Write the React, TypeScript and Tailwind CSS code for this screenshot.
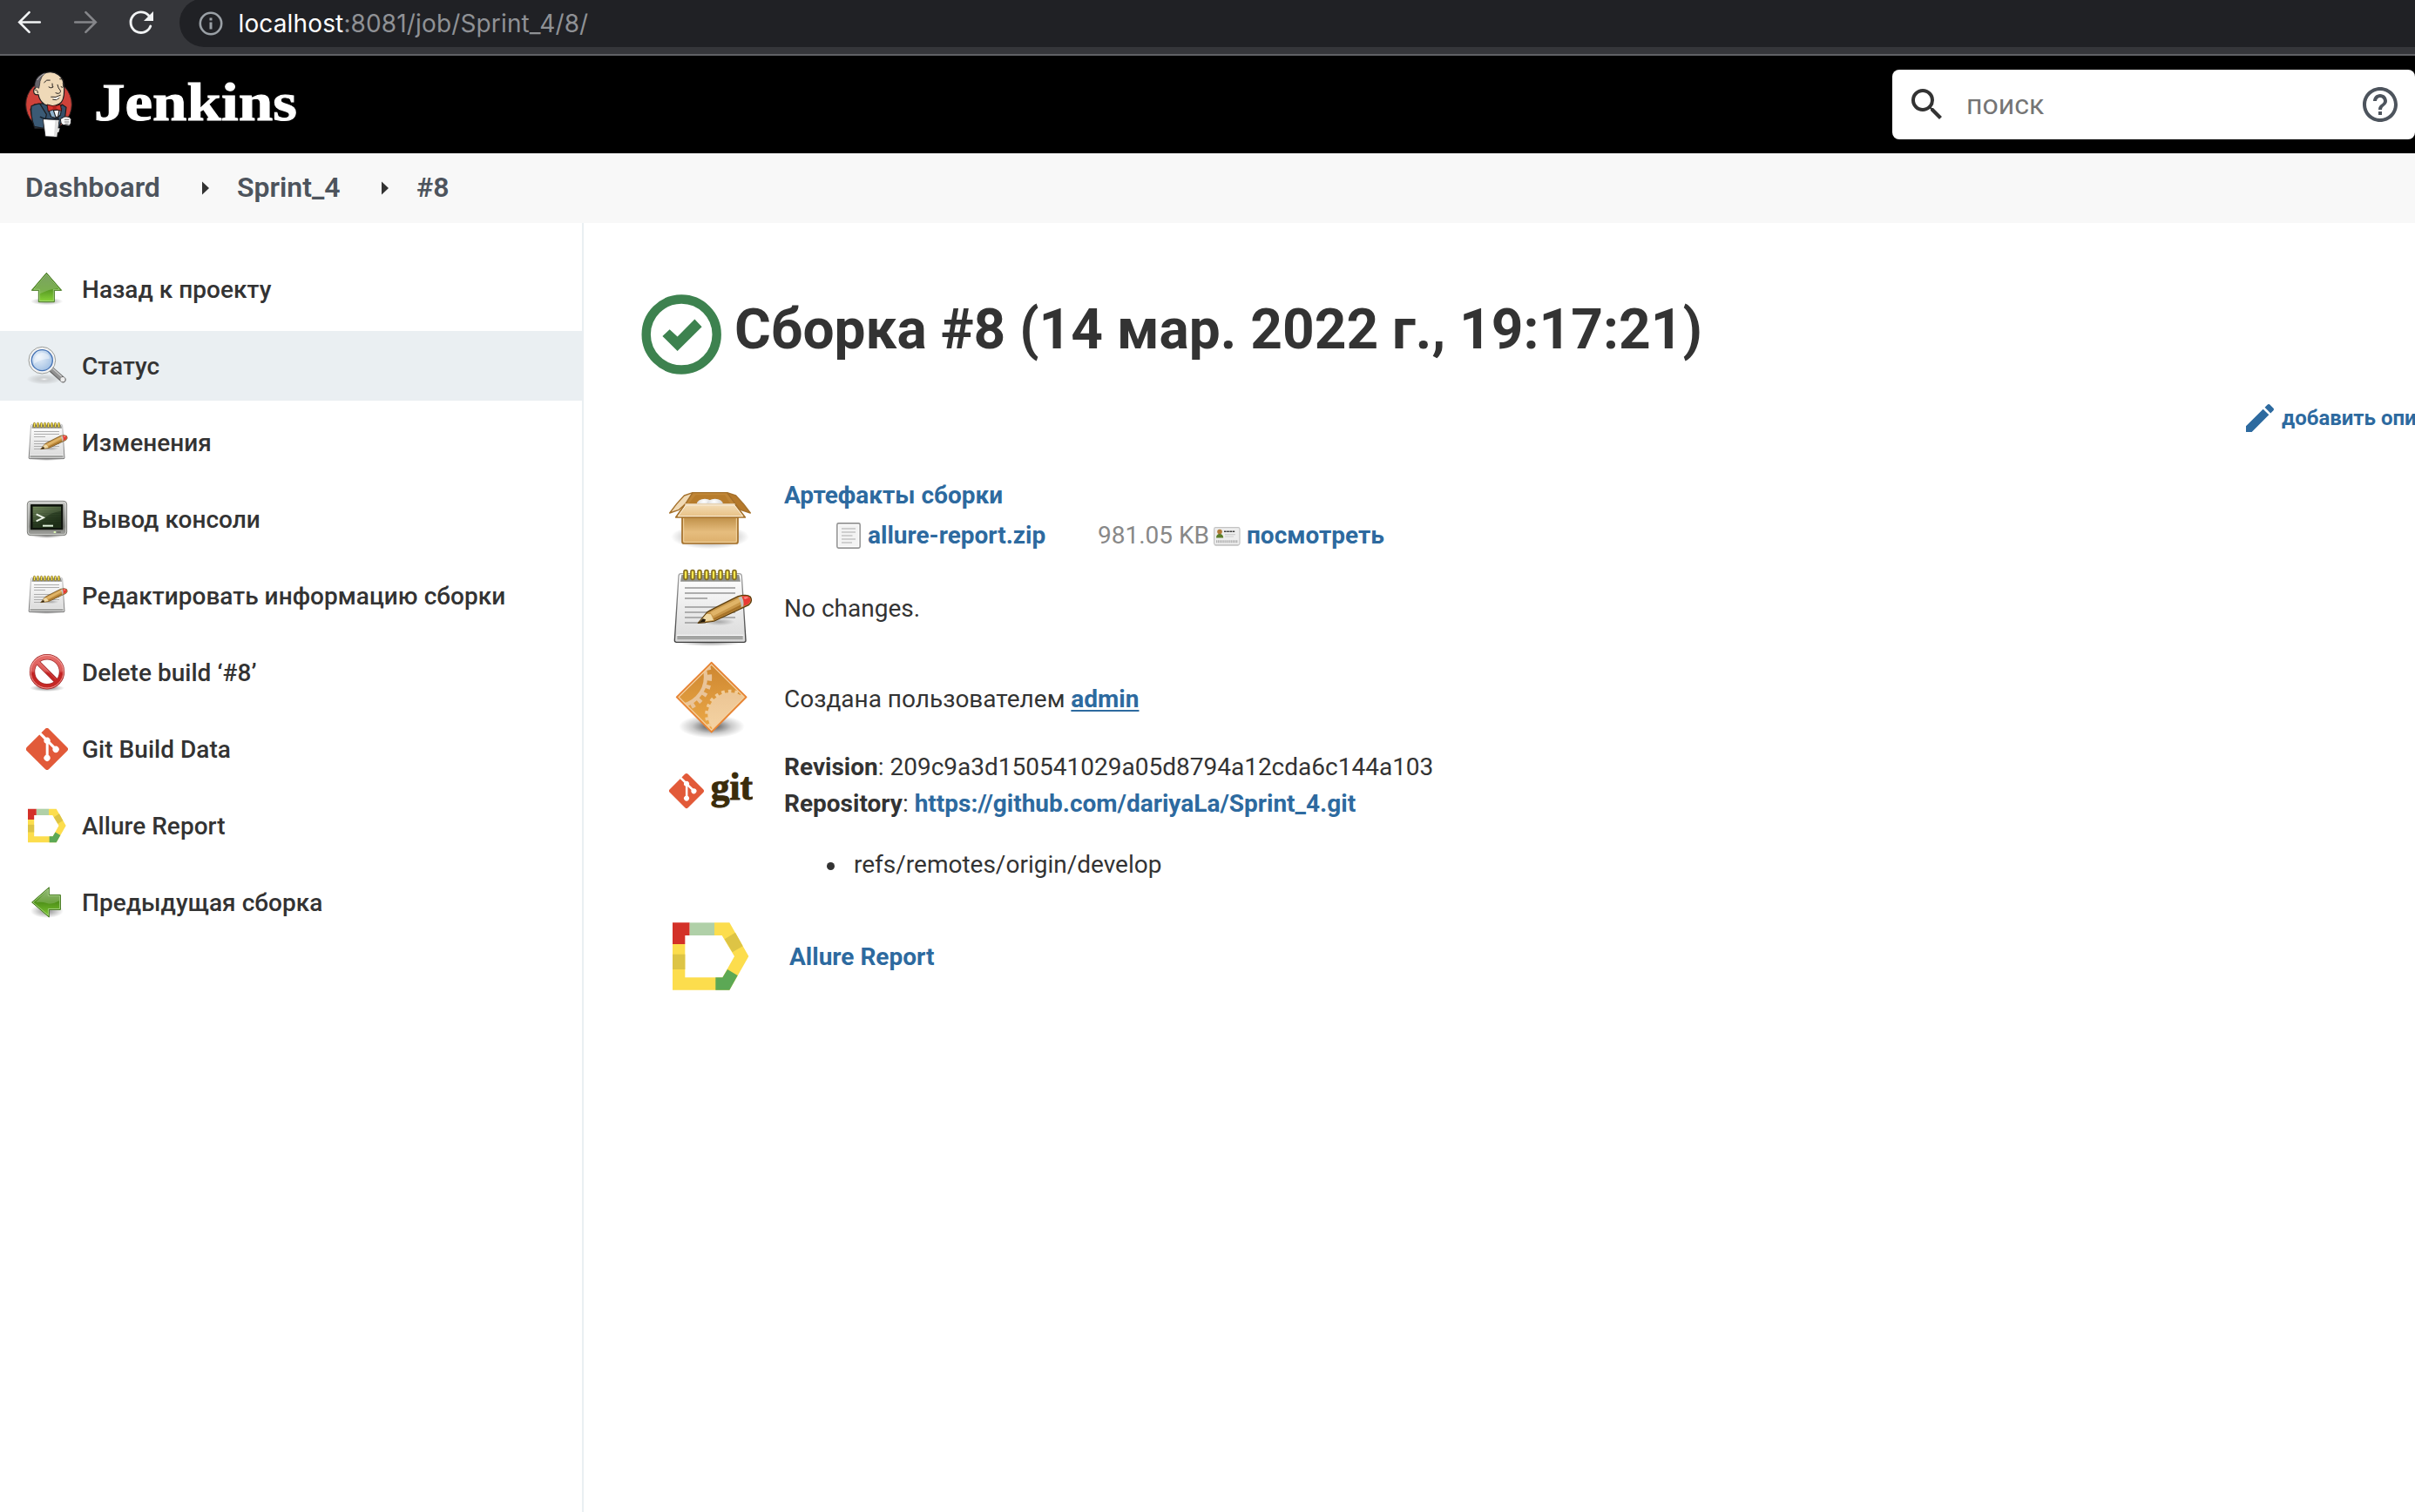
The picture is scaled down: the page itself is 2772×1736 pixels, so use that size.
import type { ReactNode } from "react";

function Notepad({ className }: { className: string }) {
  return (
    <svg viewBox="84 366 288 288" className={className}>
      <defs>
        <linearGradient id="paper" x1="0" y1="0" x2="0" y2="1">
          <stop offset="0" stopColor="#ffffff" />
          <stop offset="1" stopColor="#d9d9d9" />
        </linearGradient>
        <linearGradient id="paperEdge" x1="0" y1="0" x2="0" y2="1">
          <stop offset="0" stopColor="#a3a3a3" />
          <stop offset="1" stopColor="#3c3c3c" />
        </linearGradient>
        <radialGradient id="noteShadow">
          <stop offset="0" stopColor="#000" stopOpacity="0.45" />
          <stop offset="1" stopColor="#000" stopOpacity="0" />
        </radialGradient>
      </defs>
      <ellipse cx="225" cy="622" rx="115" ry="14" fill="url(#noteShadow)" />
      <path d="M124 386H326q7 0 8 8L348 616q0 6-6 6H109q-6 0-6-6L117 394q1-8 7-8Z" fill="url(#paper)" stroke="url(#paperEdge)" strokeWidth="4" />
      <path d="M127 390H325L330 413H123Z" fill="#8f908c" />
      <path d="M110 598H340" stroke="#fff" strokeWidth="3" />
      <path d="M112 600H338V613H112Z" fill="#a3a4a2" />
      {[141, 165, 189, 213, 237, 261, 285, 309].map((x) => (
        <rect key={x} x={x - 6} y="374" width="12" height="32" rx="6" fill="#fce94f" stroke="#857021" strokeWidth="5" />
      ))}
      <g fill="#adadad">
        <path d="M138 432H312V438H138ZM138 450H312V456H138ZM138 468H216V474H138ZM138 498H312V504H138ZM138 516H312V522H138ZM138 534H312V540H138ZM138 552H210V558H138Z" />
      </g>
      <ellipse cx="255" cy="552" rx="55" ry="13" fill="url(#noteShadow)" opacity="0.6" />
      <path d="M184 556L214 520Q220 514 322 464Q352 455 364 466Q373 482 358 494L240 549Q232 552 184 556Z" fill="#c9984a" stroke="#5c3d0c" strokeWidth="4" strokeLinejoin="round" />
      <path d="M226 520L326 470L332 482L236 532Z" fill="#e0b468" />
      <path d="M236 540L338 490L340 498L240 546Z" fill="#a8742a" />
      <path d="M188 553L213 524L228 526L237 546Z" fill="#f0d9a4" />
      <path d="M186 555L200 541L210 544L207 552Z" fill="#231809" />
      <path d="M322 469L334 464Q344 480 340 498L332 502Q333 482 322 469Z" fill="#c4c4c0" />
      <path d="M334 464Q354 458 362 468Q369 480 356 491L340 498Q344 480 334 464Z" fill="#e93a35" />
      <path d="M340 467Q352 463 358 469L345 474Z" fill="#f88f86" />
    </svg>
  );
}

function UpArrow() {
  return (
    <svg viewBox="90 54 144 144" className="size-12">
      <defs>
        <linearGradient id="up" x1="0" y1="0" x2="0" y2="1">
          <stop offset="0" stopColor="#5c8a3c" />
          <stop offset="0.6" stopColor="#5a9c24" />
          <stop offset="1" stopColor="#8ad63a" />
        </linearGradient>
        <radialGradient id="upShadow">
          <stop offset="0" stopColor="#000" stopOpacity="0.4" />
          <stop offset="1" stopColor="#000" stopOpacity="0" />
        </radialGradient>
      </defs>
      <ellipse cx="161" cy="168" rx="56" ry="13" fill="url(#upShadow)" />
      <path d="M160 70L212 130H187V170H133V130H109Z" fill="url(#up)" stroke="#44771e" strokeWidth="3" strokeLinejoin="round" />
      <path d="M160 75L205 127H184V167H136V127H116Z" fill="none" stroke="#b6dc98" strokeWidth="2" />
      <path d="M160 78L198 122Q170 126 137 142V126H119Z" fill="#fff" opacity="0.2" />
    </svg>
  );
}

function LeftArrow() {
  return (
    <svg viewBox="0 0 48 48" className="size-12">
      <defs>
        <linearGradient id="left" x1="0" y1="0" x2="0" y2="1">
          <stop offset="0" stopColor="#85ad67" />
          <stop offset="0.5" stopColor="#4f9118" />
          <stop offset="1" stopColor="#7fcb35" />
        </linearGradient>
        <radialGradient id="leftShadow">
          <stop offset="0" stopColor="#000" stopOpacity="0.45" />
          <stop offset="1" stopColor="#000" stopOpacity="0" />
        </radialGradient>
      </defs>
      <ellipse cx="24" cy="34" rx="19" ry="8" fill="url(#leftShadow)" />
      <path d="M26.3 6.8V15.6H39.4V32.4H26.3V41L6.6 24Z" fill="url(#left)" stroke="#44771e" strokeWidth="1" strokeLinejoin="round" />
      <path d="M25.4 9V16.5H38.5V31.5H25.4V38.8L8 24Z" fill="none" stroke="#b6dc98" strokeWidth="0.7" />
      <path d="M25 10V17H38V22Q30 27 24 25T11 24Z" fill="#fff" opacity="0.18" />
    </svg>
  );
}

function Magnifier() {
  return (
    <svg viewBox="90 318 144 144" className="size-12">
      <defs>
        <radialGradient id="lens" cx="0.35" cy="0.35" r="0.75">
          <stop offset="0" stopColor="#e8f1fa" />
          <stop offset="0.6" stopColor="#bdd3ec" />
          <stop offset="1" stopColor="#9bbce2" />
        </radialGradient>
        <radialGradient id="lensShadow">
          <stop offset="0" stopColor="#fff" stopOpacity="0.9" />
          <stop offset="0.35" stopColor="#999" stopOpacity="0.35" />
          <stop offset="1" stopColor="#777" stopOpacity="0" />
        </radialGradient>
      </defs>
      <ellipse cx="152" cy="436" rx="60" ry="18" fill="url(#lensShadow)" />
      <path d="M176 402L217 438" stroke="#6a6a6a" strokeWidth="20" strokeLinecap="round" />
      <path d="M178 402L210 431" stroke="#929292" strokeWidth="14" />
      <path d="M181 399L212 427" stroke="#c9c9c9" strokeWidth="4" />
      <circle cx="216" cy="437" r="8" fill="#ededed" />
      <circle cx="145" cy="371" r="46" fill="#f4f4f4" stroke="#888a85" strokeWidth="2.5" />
      <circle cx="145" cy="371" r="36" fill="url(#lens)" stroke="#4472b4" strokeWidth="4" />
      <path d="M117 383Q113 352 143 344Q172 347 171 365Q140 366 117 383Z" fill="#fff" opacity="0.4" />
    </svg>
  );
}

function Terminal() {
  return (
    <svg viewBox="90 846 144 144" className="size-12">
      <defs>
        <linearGradient id="bezel" x1="0" y1="0" x2="0" y2="1">
          <stop offset="0" stopColor="#c8c9c6" />
          <stop offset="0.75" stopColor="#7d7f7a" />
          <stop offset="1" stopColor="#a5a6a2" />
        </linearGradient>
        <linearGradient id="screen" x1="0" y1="0" x2="0.5" y2="1">
          <stop offset="0" stopColor="#6c8454" />
          <stop offset="0.5" stopColor="#33472a" />
          <stop offset="1" stopColor="#1d2e17" />
        </linearGradient>
        <radialGradient id="termShadow">
          <stop offset="0" stopColor="#000" stopOpacity="0.5" />
          <stop offset="1" stopColor="#000" stopOpacity="0" />
        </radialGradient>
      </defs>
      <ellipse cx="162" cy="975" rx="56" ry="9" fill="url(#termShadow)" />
      <rect x="94" y="856" width="136" height="118" rx="11" fill="url(#bezel)" stroke="#6c6e69" strokeWidth="2.5" />
      <rect x="97" y="859" width="130" height="112" rx="9" fill="none" stroke="#e6e7e5" strokeWidth="2" />
      <rect x="105" y="867" width="112" height="88" rx="2" fill="#10150e" />
      <rect x="113" y="875" width="97" height="73" fill="url(#screen)" />
      <path d="M113 882H210M113 890H210M113 898H210M113 906H210M113 914H210M113 922H210M113 930H210M113 938H210" stroke="#1d2a17" strokeWidth="2" opacity="0.5" />
      <path d="M113 875H210V890Q165 896 150 920L113 928Z" fill="#b9cf9a" opacity="0.16" />
      <path d="M125 901L150 913L125 925" fill="none" stroke="#eef5e9" strokeWidth="5.5" />
      <rect x="147" y="938" width="36" height="6" fill="#e0f2dc" />
      <rect x="185" y="960" width="7" height="6" fill="#d8f5b0" />
      <rect x="195" y="960" width="15" height="6" rx="3" fill="#73756f" />
    </svg>
  );
}

function Forbidden() {
  return (
    <svg viewBox="0 0 48 48" className="size-12" fill="none">
      <defs>
        <linearGradient id="ban" gradientUnits="userSpaceOnUse" x1="0" y1="3" x2="0" y2="43">
          <stop offset="0" stopColor="#e5706d" />
          <stop offset="0.48" stopColor="#dc5a57" />
          <stop offset="0.55" stopColor="#c22323" />
          <stop offset="1" stopColor="#c72b26" />
        </linearGradient>
        <radialGradient id="banShadow">
          <stop offset="0" stopColor="#000" stopOpacity="0.5" />
          <stop offset="1" stopColor="#000" stopOpacity="0" />
        </radialGradient>
      </defs>
      <ellipse cx="24" cy="42" rx="20" ry="4" fill="url(#banShadow)" />
      <circle cx="24" cy="23.2" r="17" stroke="#a22b2b" strokeWidth="6.4" />
      <path d="M12.5 11.7L35.5 34.7" stroke="#a22b2b" strokeWidth="5.6" />
      <circle cx="24" cy="23.2" r="17" stroke="url(#ban)" strokeWidth="5" />
      <path d="M12.5 11.7L35.5 34.7" stroke="url(#ban)" strokeWidth="4.2" />
      <circle cx="24" cy="23.2" r="18.8" stroke="#f5aaa6" strokeWidth="0.9" />
      <path d="M14.5 12.2L34 31.7" stroke="#ef9a96" strokeWidth="0.6" opacity="0.6" />
    </svg>
  );
}

/* Git diamond, drawn in a 92 x 92 box. */
function GitMark() {
  return (
    <path
      fill="#e25a39"
      d="M90.156 41.965 50.036 1.848a5.918 5.918 0 0 0-8.372 0l-8.328 8.332 10.566 10.566a7.03 7.03 0 0 1 7.23 1.684 7.034 7.034 0 0 1 1.669 7.277l10.187 10.184a7.028 7.028 0 0 1 7.278 1.672 7.04 7.04 0 0 1 0 9.957 7.05 7.05 0 0 1-9.965 0 7.044 7.044 0 0 1-1.528-7.66l-9.5-9.497V59.36a7.04 7.04 0 0 1 1.86 11.29 7.04 7.04 0 0 1-9.957 0 7.04 7.04 0 0 1 0-9.958 7.06 7.06 0 0 1 2.304-1.539V33.926a7.049 7.049 0 0 1-3.82-9.234L29.242 14.272 1.73 41.777a5.925 5.925 0 0 0 0 8.371L41.852 90.27a5.925 5.925 0 0 0 8.37 0l39.934-39.934a5.925 5.925 0 0 0 0-8.371"
    />
  );
}

function AllureMark({ className }: { className: string }) {
  return (
    <svg viewBox="84 600 288 288" className={className}>
      <path d="M96 702H139V817H268L309 744L266 672H240V628H292L358 744L292 860H96Z" fill="#fcdd4d" />
      <path d="M96 628H155V672H139V702H96Z" fill="#d33128" />
      <path d="M155 628H240V672H155Z" fill="#b0d0a8" />
      <path d="M96 737H139V789H96Z" fill="#ddc445" />
      <path d="M275 685L312 662L338 709L302 730Z" fill="#ddc445" />
      <path d="M244 817H268L285 789L320 810L292 860H244Z" fill="#5ca855" />
    </svg>
  );
}

function PackageBox() {
  return (
    <svg viewBox="84 54 288 288" className="size-24 shrink-0">
      <defs>
        <linearGradient id="front" x1="0" y1="0" x2="0" y2="1">
          <stop offset="0" stopColor="#b9883f" />
          <stop offset="0.6" stopColor="#e6bd7e" />
          <stop offset="1" stopColor="#dcae6a" />
        </linearGradient>
        <linearGradient id="flap" x1="0" y1="0" x2="0" y2="1">
          <stop offset="0" stopColor="#f3dcb5" />
          <stop offset="1" stopColor="#e7bf82" />
        </linearGradient>
        <radialGradient id="boxShadow">
          <stop offset="0" stopColor="#000" stopOpacity="0.6" />
          <stop offset="0.6" stopColor="#000" stopOpacity="0.2" />
          <stop offset="1" stopColor="#000" stopOpacity="0" />
        </radialGradient>
        <radialGradient id="foam" cx="0.45" cy="0.25" r="0.7">
          <stop offset="0" stopColor="#fff" />
          <stop offset="1" stopColor="#c9c9c9" />
        </radialGradient>
      </defs>
      <ellipse cx="225" cy="256" rx="135" ry="42" fill="url(#boxShadow)" />
      <path d="M129 180H321V272Q321 279 314 279H136Q129 279 129 272Z" fill="url(#front)" stroke="#a4702b" strokeWidth="5" />
      <path d="M134 192V270Q134 274 138 274H312Q316 274 316 270V192" fill="none" stroke="#f1d5a4" strokeWidth="3" />
      <path d="M165 104H284L313 143H140Z" fill="#c08637" stroke="#a4702b" strokeWidth="4" />
      <path d="M176 112H276L296 143H150Z" fill="#b77c2c" />
      <ellipse cx="207" cy="143" rx="28" ry="18" fill="url(#foam)" />
      <ellipse cx="242" cy="143" rx="28" ry="18" fill="url(#foam)" />
      <path d="M165 104L136 114Q110 140 86 174L118 163L140 143Z" fill="#f0d9b4" stroke="#a4702b" strokeWidth="4" strokeLinejoin="round" />
      <path d="M284 104L314 114Q340 140 364 174L330 163L312 143Z" fill="#b5792b" stroke="#a4702b" strokeWidth="4" strokeLinejoin="round" />
      <path d="M139 144H311L346 189H107Z" fill="url(#flap)" stroke="#a4702b" strokeWidth="5" strokeLinejoin="round" />
      <path d="M139 144H311" stroke="#f7e8cf" strokeWidth="5" />
      <path d="M142 147H309L338 185H115Z" fill="none" stroke="#faeedb" strokeWidth="3" />
    </svg>
  );
}

function GearDiamond() {
  return (
    <svg viewBox="84 678 288 288" className="size-24 shrink-0">
      <defs>
        <linearGradient id="diamond" x1="0" y1="0" x2="0" y2="1">
          <stop offset="0" stopColor="#cd8630" />
          <stop offset="1" stopColor="#edaa48" />
        </linearGradient>
        <linearGradient id="gear" x1="0" y1="0" x2="0" y2="1">
          <stop offset="0" stopColor="#ecc594" />
          <stop offset="1" stopColor="#f6d6a6" />
        </linearGradient>
        <radialGradient id="gearShadow">
          <stop offset="0" stopColor="#000" stopOpacity="0.7" />
          <stop offset="0.6" stopColor="#000" stopOpacity="0.2" />
          <stop offset="1" stopColor="#000" stopOpacity="0" />
        </radialGradient>
        <clipPath id="diamondClip">
          <path d="M230 698L344 811L230 926L116 811Z" />
        </clipPath>
      </defs>
      <ellipse cx="231" cy="912" rx="114" ry="40" fill="url(#gearShadow)" />
      <path d="M230 692L350 811L230 932L110 811Z" fill="url(#diamond)" />
      <g clipPath="url(#diamondClip)">
        <circle cx="110" cy="742" r="100" fill="none" stroke="#e9c499" strokeWidth="13" />
        <circle cx="110" cy="742" r="113" fill="none" stroke="#e9c499" strokeWidth="17" strokeDasharray="13 15" />
        <circle cx="294" cy="872" r="77" fill="url(#gear)" />
        <circle cx="294" cy="872" r="80" fill="none" stroke="#f0cb98" strokeWidth="13" strokeDasharray="11 12" />
      </g>
      <path d="M230 699L343 811L230 925L117 811Z" fill="none" stroke="#f5ce9d" strokeWidth="4" />
      <path d="M230 692L350 811L230 932L110 811Z" fill="none" stroke="#e88435" strokeWidth="5" strokeLinejoin="round" />
    </svg>
  );
}

function GitLogo() {
  return (
    <svg viewBox="84 30 288 288" className="mt-1 size-24 shrink-0">
      <g transform="translate(84 114) scale(1.304)">
        <GitMark />
      </g>
      <text x="227" y="204" fontFamily="Liberation Serif" fontWeight="700" fontSize="130" textLength="145" lengthAdjust="spacingAndGlyphs" fill="#3b2c0b" stroke="#3b2c0b" strokeWidth="3">
        git
      </text>
    </svg>
  );
}

function Butler() {
  return (
    <svg viewBox="84 60 168 240" className="h-20 w-14">
      <ellipse cx="168" cy="180" rx="79" ry="84" fill="#cf423a" stroke="#3a2422" strokeWidth="3" />
      <g stroke="#1c1c1e" strokeWidth="3.5" strokeLinejoin="round">
        <path d="M118 180L150 176L196 200L214 180L228 190L224 222L206 250L200 272L160 262L120 262L112 232L105 196Z" fill="#35506a" />
        <path d="M108 185Q128 175 138 178L160 214L150 262L118 256Q104 216 108 185Z" fill="#3b5a75" />
        <path d="M166 196L212 194L208 216L196 228L176 222Z" fill="#8fb3cd" />
        <path d="M184 200L204 198L200 222L192 224Z" fill="#f4f4f4" />
        <path d="M122 124Q118 90 148 74Q178 60 202 78Q222 92 221 128Q222 168 204 178Q180 192 154 180Q136 168 132 146Q116 148 116 134Q116 124 122 124Z" fill="#efd9b8" />
      </g>
      <path d="M120 124Q116 88 146 74Q150 72 156 72Q142 82 138 100Q136 116 134 124L126 120Z" fill="#65636a" stroke="#26262a" strokeWidth="2" />
      <path d="M128 96Q140 78 154 73" fill="none" stroke="#b8b4b4" strokeWidth="3" />
      <g fill="none" stroke="#2a2522" strokeWidth="3" strokeLinecap="round">
        <path d="M152 104Q160 92 172 96" />
        <path d="M206 92Q214 90 218 96" />
        <path d="M168 120Q176 126 183 120M180 108L181 119" />
        <path d="M210 119Q215 124 219 119M217 106L218 116" />
        <path d="M198 112Q200 124 208 132Q210 142 198 142L192 140" />
        <path d="M176 154Q192 158 208 148" />
        <path d="M182 163Q194 168 204 158" />
        <path d="M122 130Q130 128 130 140" />
      </g>
      <path d="M178 155Q192 160 206 151Q202 162 190 162Z" fill="#fff" />
      <path d="M162 180L186 186L208 180L212 202L188 196L166 204Z" fill="#d8342e" stroke="#3a1412" strokeWidth="3" strokeLinejoin="round" />
      <path d="M182 184H194V198H182Z" fill="#b32320" />
      <path d="M148 230L204 232L196 292L156 290Z" fill="#fff" stroke="#1c1c1e" strokeWidth="2.5" />
      <path d="M190 234L202 234L196 290L186 290Z" fill="#dedede" />
      <path d="M138 222Q148 232 204 230" fill="none" stroke="#16202b" strokeWidth="5" />
      <path d="M208 230L222 222Q242 220 245 232Q246 248 238 253L216 250Q208 246 208 230Z" fill="#f5f5f5" stroke="#1c1c1e" strokeWidth="3" />
      <path d="M222 232H238M222 240H238M224 247H236" stroke="#444" strokeWidth="2" />
      <path d="M198 262H206L202 276H198Z" fill="#ddd" />
    </svg>
  );
}

function FileIcon() {
  return (
    <svg viewBox="0 0 28 30" className="mr-2 h-[30px] w-7">
      <rect x="0.9" y="0.9" width="26.2" height="28.2" rx="1.6" fill="#f3f3f3" stroke="#8e8e8e" strokeWidth="1.6" />
      <rect x="2.4" y="2.4" width="23.2" height="25.2" fill="none" stroke="#fff" strokeWidth="1.2" />
      <path d="M6 7H22M6 11H22M6 15H18.5M6 19H22M6 23H18" stroke="#c4c4c4" strokeWidth="1.7" />
    </svg>
  );
}

function CardIcon() {
  return (
    <svg viewBox="0 0 32 24" className="mt-0.5 mr-[7px] h-6 w-8">
      <rect x="2" y="20" width="28" height="3" rx="1.5" fill="#c4c4c4" opacity="0.7" />
      <rect x="1.6" y="1.6" width="29.4" height="20" rx="1.8" fill="#ededed" stroke="#c3c3c3" strokeWidth="1.2" />
      <circle cx="8" cy="6.6" r="2.8" fill="#b07a38" />
      <path d="M4 13.6Q4 9 8 9T12.2 13.6Z" fill="#5a7d28" />
      <path d="M13 6.2H25.5" stroke="#3c3c3c" strokeWidth="1.5" strokeDasharray="2.6 0.6" />
      <path d="M14 9.6H26M14 12H24" stroke="#cfcfcf" strokeWidth="1.2" />
      <path d="M4 17.8H29" stroke="#b0b0b0" strokeWidth="3" strokeDasharray="1.2 0.7" />
    </svg>
  );
}

function BrowserBar() {
  return (
    <div className="flex h-16 items-start border-b-2 border-[#606165] bg-[#35363a]">
      <svg viewBox="0 0 206 62" className="h-[62px] w-[206px] shrink-0" fill="none" strokeLinecap="round">
        <path d="M45.8 25.5H23M33.6 14.2L22.2 25.5L33.6 36.8" stroke="#f1f3f4" strokeWidth="2.6" />
        <path d="M86.2 25.5H109M98.4 14.2L109.8 25.5L98.4 36.8" stroke="#85868a" strokeWidth="2.6" />
        <path d="M172.8 30A11.8 11.8 0 1 1 170.4 17.6" stroke="#f1f3f4" strokeWidth="2.9" />
        <path d="M176 13V24H165Z" fill="#f1f3f4" />
      </svg>
      <div className="-mt-0.5 flex h-14 flex-1 items-center rounded-l-[28px] bg-[#202125] pl-[22px]">
        <svg viewBox="0 0 28 28" className="mt-px size-7" fill="none" stroke="#9aa0a6" strokeWidth="2.6">
          <circle cx="14" cy="14" r="12.2" />
          <path d="M14 12.6V20.6M14 7.6V10.4" strokeWidth="3" />
        </svg>
        <span className="mt-px ml-[17.5px] font-['Inter'] text-[28px] leading-9 tracking-[0.14px] whitespace-nowrap text-[#8f9195]">
          <span className="text-white">localhost</span>:8081/job/Sprint_4/8/
        </span>
      </div>
    </div>
  );
}

function Header() {
  return (
    <header className="flex h-28 items-center bg-black pl-7">
      <Butler />
      <svg viewBox="0 0 256 80" className="ml-4 h-20 w-64">
        <text x="8" y="58" fontFamily="Liberation Serif" fontWeight="700" fontSize="61" textLength="233" lengthAdjust="spacingAndGlyphs" fill="#fff" stroke="#fff" strokeWidth="1">
          Jenkins
        </text>
      </svg>
      <div className="ml-auto flex h-20 w-[600px] items-center rounded-lg bg-white pr-5 pl-4">
        <svg viewBox="0 0 24 24" className="size-12" fill="#333">
          <path d="M15.5 14h-.79l-.28-.27A6.471 6.471 0 0 0 16 9.5 6.5 6.5 0 1 0 9.5 16c1.61 0 3.09-.59 4.23-1.57l.27.28v.79l5 4.99L20.49 19l-4.99-5zm-6 0C7.01 14 5 11.99 5 9.5S7.01 5 9.5 5 14 7.01 14 9.5 11.99 14 9.5 14z" />
        </svg>
        <span className="-mt-px ml-[21px] text-[32px] leading-10 text-[#757575]">поиск</span>
        <svg viewBox="2 2 20 20" className="ml-auto size-10" fill="#4d545d">
          <path d="M11 18h2v-2h-2v2zm1-16C6.48 2 2 6.48 2 12s4.48 10 10 10 10-4.48 10-10S17.52 2 12 2zm0 18c-4.41 0-8-3.59-8-8s3.59-8 8-8 8 3.59 8 8-3.59 8-8 8zm0-14c-2.21 0-4 1.79-4 4h2c0-1.1.9-2 2-2s2 .9 2 2c0 2-3 1.75-3 5h2c0-2.25 3-2.5 3-5 0-2.21-1.79-4-4-4z" />
        </svg>
      </div>
    </header>
  );
}

function Caret() {
  return (
    <svg viewBox="0 0 8 16" className="mt-px h-4 w-2" fill="#333">
      <path d="M0 0.5L8 8L0 15.5Z" />
    </svg>
  );
}

function Breadcrumbs() {
  return (
    <nav className="flex h-20 items-center bg-[#f8f8f8] pb-[2px] pl-[29px] text-[32px] leading-10 font-semibold text-[#4d545d]">
      <span className="w-[203px]">Dashboard</span>
      <Caret />
      <span className="ml-8 w-[166px]">Sprint_4</span>
      <Caret />
      <span className="ml-8">#8</span>
    </nav>
  );
}

const tasks: { label: string; icon: ReactNode; active?: boolean }[] = [
  { label: "Назад к проекту", icon: <UpArrow /> },
  { label: "Статус", icon: <Magnifier />, active: true },
  { label: "Изменения", icon: <Notepad className="size-12" /> },
  { label: "Вывод консоли", icon: <Terminal /> },
  { label: "Редактировать информацию сборки", icon: <Notepad className="size-12" /> },
  { label: "Delete build ‘#8’", icon: <Forbidden /> },
  {
    label: "Git Build Data",
    icon: (
      <svg viewBox="0 0 92 92" className="size-12">
        <GitMark />
      </svg>
    ),
  },
  { label: "Allure Report", icon: <AllureMark className="size-12" /> },
  { label: "Предыдущая сборка", icon: <LeftArrow /> },
];

function Sidebar() {
  return (
    <aside className="flex w-[670px] shrink-0 flex-col gap-2 border-r-2 border-[#eaeff2] pt-9">
      {tasks.map((task) => (
        <a
          key={task.label}
          className={
            task.active
              ? "flex h-20 items-center gap-4 bg-[#eaeff2] pl-[30px] font-medium whitespace-nowrap"
              : "flex h-20 items-center gap-4 pl-[30px] font-medium whitespace-nowrap"
          }
        >
          {task.icon}
          <span className="mt-0.5 tracking-[0.03px]">{task.label}</span>
        </a>
      ))}
    </aside>
  );
}

function BuildPage() {
  return (
    <main className="flex-1 overflow-hidden pt-20 pl-[66px]">
      <div className="flex h-24 items-center">
        <svg viewBox="0 0 92 92" className="size-[92px]">
          <circle cx="46.2" cy="46" r="40.5" fill="none" stroke="#3d824f" strokeWidth="10.4" />
          <path d="M24.4 48L32.6 40.2L41.6 48.6L61.4 28.6L69.6 37.2L41.6 65Z" fill="#3d824f" />
        </svg>
        <h1 className="-mt-2.5 ml-[15px] text-[64px] leading-none font-bold whitespace-nowrap">
          Сборка #8 (14 мар. 2022 г., 19:17:21)
        </h1>
      </div>

      <a className="mt-6 ml-auto flex h-12 w-[194px] items-center text-2xl font-bold whitespace-nowrap text-[#2d6a9f]">
        <svg viewBox="3 3 18 18" className="mr-[9px] size-8 shrink-0" fill="#2d6a9f">
          <path d="M3 17.25V21h3.75L17.81 9.94l-3.75-3.75L3 17.25zM20.71 7.04c.39-.39.39-1.02 0-1.41l-2.34-2.34c-.39-.39-1.02-.39-1.41 0l-1.83 1.83 3.75 3.75 1.83-1.83z" />
        </svg>
        добавить описание
      </a>

      <div className="mt-10 ml-8 whitespace-nowrap">
        <section className="flex h-[104px] gap-9 pt-[5px]">
          <PackageBox />
          <div className="-mt-[3px]">
            <a className="flex h-[46px] items-center font-bold text-[#2d6a9f]">Артефакты сборки</a>
            <div className="flex h-[46px] items-center pl-[60px]">
              <FileIcon />
              <a className="w-[264px] font-bold text-[#2d6a9f]">allure-report.zip</a>
              <span className="w-[132px] text-[#888]">981.05 KB</span>
              <CardIcon />
              <a className="font-bold text-[#2d6a9f]">посмотреть</a>
            </div>
          </div>
        </section>

        <section className="flex h-[104px] items-center gap-9">
          <Notepad className="size-24 shrink-0" />
          <p className="pb-[3px]">No changes.</p>
        </section>

        <section className="flex h-[104px] items-center gap-9">
          <GearDiamond />
          <p className="pb-[3px]">
            Создана пользователем{" "}
            <a className="font-bold text-[#2d6a9f] underline decoration-2 underline-offset-[3px]">admin</a>
          </p>
        </section>

        <section className="flex h-[188px] gap-9">
          <GitLogo />
          <div className="pt-1">
            <p>
              <b>Revision</b>: 209c9a3d150541029a05d8794a12cda6c144a103
            </p>
            <p>
              <b>Repository</b>: <a className="font-bold text-[#2d6a9f]">https://github.com/dariyaLa/Sprint_4.git</a>
            </p>
            <div className="mt-7 flex items-center pl-[49px]">
              <span className="mt-[3px] mr-[22px] size-[9px] rounded-full bg-[#333]" />
              refs/remotes/origin/develop
            </div>
          </div>
        </section>

        <section className="flex h-[108px] items-center gap-[42px]">
          <AllureMark className="size-24 shrink-0" />
          <a className="mt-0.5 font-bold text-[#2d6a9f]">Allure Report</a>
        </section>
      </div>
    </main>
  );
}

export default function App() {
  return (
    <div className="flex h-[1736px] w-[2772px] flex-col overflow-hidden bg-white font-['Roboto',sans-serif] text-[28px] leading-[42px] text-[#333]">
      <BrowserBar />
      <Header />
      <Breadcrumbs />
      <div className="flex flex-1">
        <Sidebar />
        <BuildPage />
      </div>
    </div>
  );
}
